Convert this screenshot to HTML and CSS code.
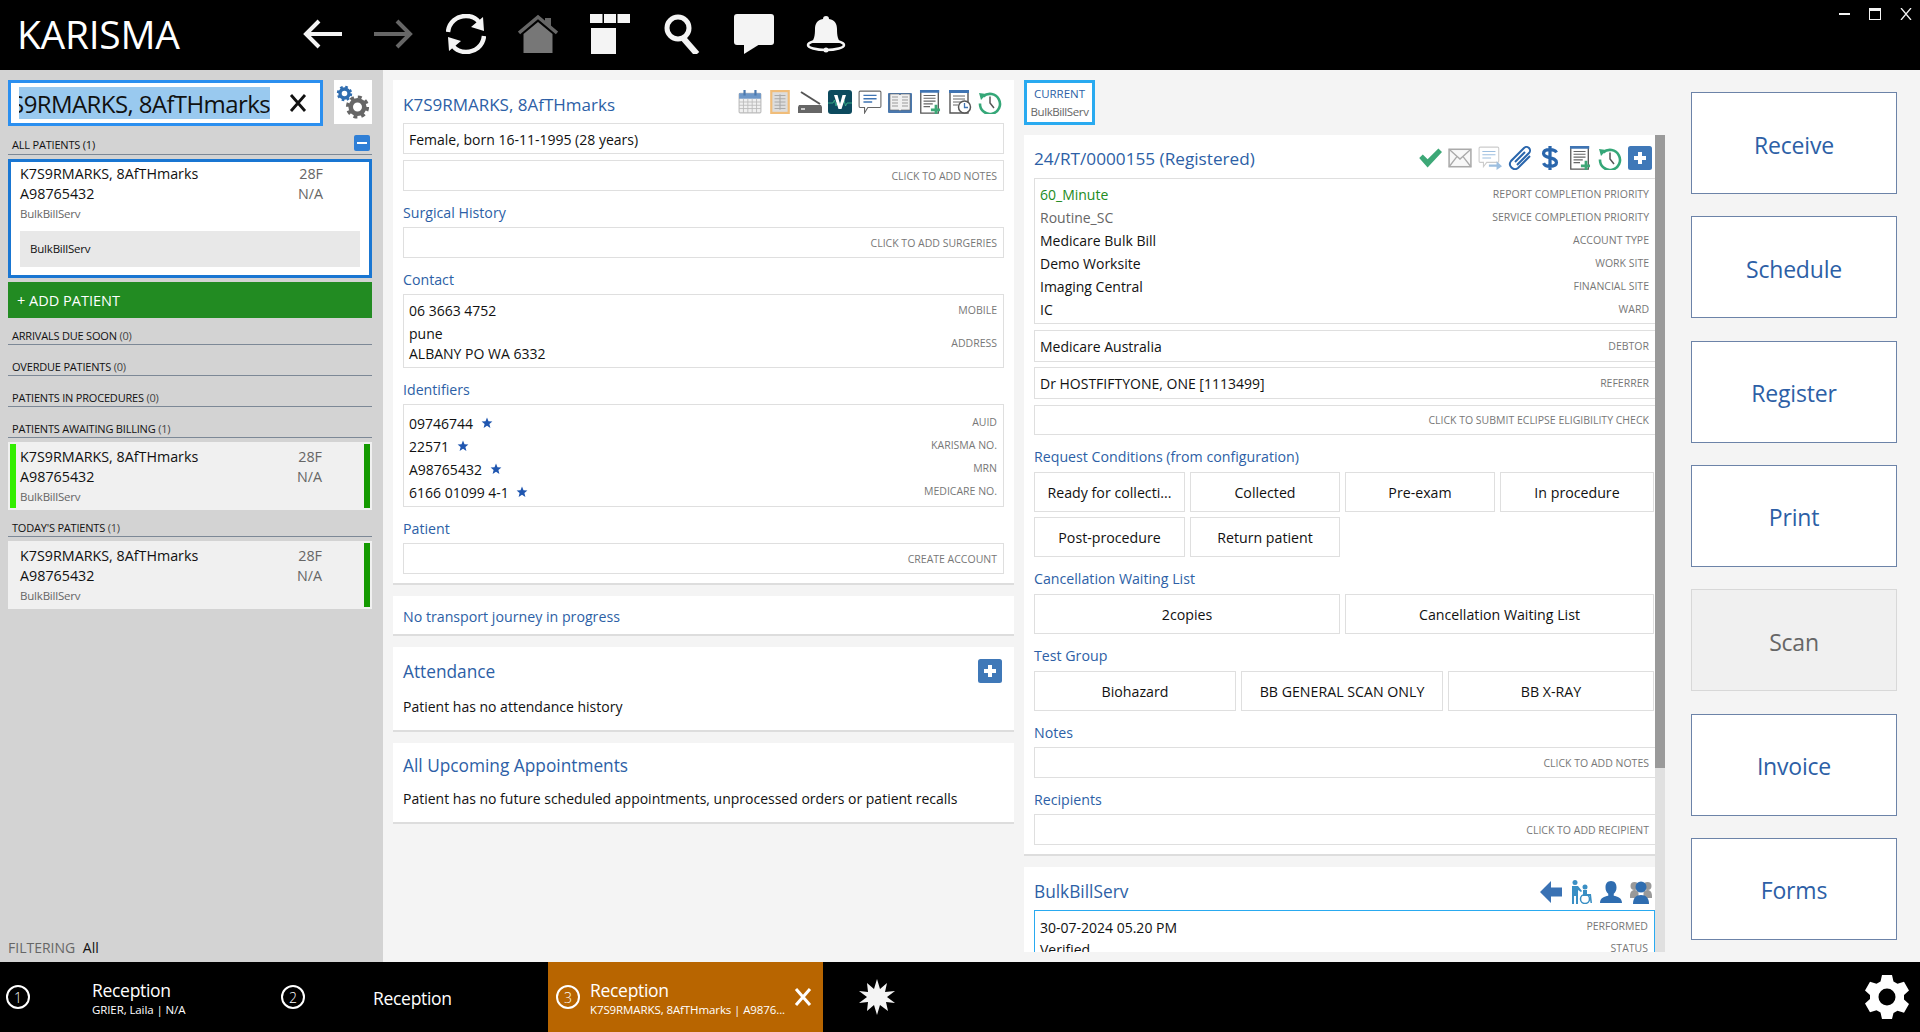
FILE: index.html
```html
<!DOCTYPE html>
<html lang="en">
<head>
  <meta charset="UTF-8">
  <meta name="viewport" content="width=device-width, initial-scale=1.0">
  <title>Karisma - Reception</title>
  <link rel="stylesheet" href="styles.css">
</head>
<body>
  <!-- shared icons -->
  <svg class="icon-defs" xmlns="http://www.w3.org/2000/svg">
    <symbol id="i-docplus" viewBox="0 0 22 26">
      <path d="M1 1h19v24H1z" fill="#fff" stroke="#555" stroke-width="1.4"/>
      <path d="M0 0h21v3H0z" fill="#3f74b3"/>
      <path d="M4 6h13M4 9h13M4 12h13M4 15h10M4 18h7" stroke="#666" stroke-width="1.2"/>
      <path d="M12 20h4v-4h3v4h3v3h-3v3h-3v-3h-4z" fill="#3da877"/>
    </symbol>
    <symbol id="i-history" viewBox="0 0 24 24">
      <path d="M5.2 6.6A10 10 0 1 1 2 13.5" fill="none" stroke="#35a778" stroke-width="2.6"/>
      <path d="M1 3l7.5 1L3 10z" fill="#35a778"/>
      <path d="M12 6.5v6.5l4 5" fill="none" stroke="#555" stroke-width="1.5"/>
    </symbol>
    <symbol id="i-plus" viewBox="0 0 24 24">
      <rect width="24" height="24" rx="2.5" fill="#3f78b8"/>
      <path d="M10 6h4v4h4v4h-4v4h-4v-4H6v-4h4z" fill="#fff"/>
    </symbol>
    <symbol id="i-star" viewBox="0 0 12 12">
      <path d="M6 .5l1.5 3.7 3.9.3-3 2.5 1 3.9L6 8.8l-3.4 2.1 1-3.9-3-2.5 3.9-.3z" fill="#1f56b0"/>
    </symbol>
  </svg>

  <header class="topbar">
    <div class="logo">KARISMA</div>
    <nav class="topnav">
      <svg viewBox="0 0 40 40"><path d="M40 20H5M17 7 4 20l13 13" fill="none" stroke="#f4f4f4" stroke-width="4"/></svg>
      <svg viewBox="0 0 40 40"><path d="M0 20h35M23 7l13 13-13 13" fill="none" stroke="#666" stroke-width="4"/></svg>
      <svg viewBox="0 0 40 40">
        <path d="M2 18C3 8 11 2 20 2c5 0 10 2 13 6" fill="none" stroke="#f4f4f4" stroke-width="4.5"/>
        <path d="M38 22c-1 10-9 16-18 16-5 0-10-2-13-6" fill="none" stroke="#f4f4f4" stroke-width="4.5"/>
        <path d="M37 3l1 14-13-4zM3 37 2 23l13 4z" fill="#f4f4f4"/>
      </svg>
      <svg viewBox="0 0 40 40">
        <path d="M27 4h6v9l-6-5z" fill="#666"/>
        <path d="M1 19 20 3l19 16" fill="none" stroke="#666" stroke-width="3.500"/>
        <path d="M5.500 20 20 8l14.500 12v19h-29z" fill="#777"/>
      </svg>
      <svg viewBox="0 0 40 40">
        <path d="M0 0h12.500v9H0zM14 0h12v9H14zM27.500 0H40v9H27.500zM1 14h25v26H1z" fill="#f4f4f4"/>
      </svg>
      <svg viewBox="0 0 40 40">
        <circle cx="16" cy="14" r="11" fill="none" stroke="#f4f4f4" stroke-width="5"/>
        <path d="M21 24l14 16" stroke="#f4f4f4" stroke-width="6"/>
      </svg>
      <svg viewBox="0 0 40 40">
        <rect width="40" height="31" rx="3" fill="#f4f4f4"/>
        <path d="M10 30v10l16-10z" fill="#f4f4f4"/>
      </svg>
      <svg viewBox="0 0 40 40">
        <path d="M20 2c2 0 3 1 3 3 6 1 8 5 8 10 0 7 1 11 4 14H5c3-3 4-7 4-14 0-5 2-9 8-10 0-2 1-3 3-3z" fill="#f4f4f4"/>
        <ellipse cx="20" cy="31" rx="18" ry="5" fill="none" stroke="#f4f4f4" stroke-width="2.500"/>
        <circle cx="20" cy="36" r="2.500" fill="#f4f4f4"/>
      </svg>
    </nav>
    <div class="window-btns">
      <span class="win-min"></span>
      <span class="win-max"></span>
      <svg viewBox="0 0 12 12" width="12" height="12"><path d="M1 0l10 12M11 0 1 12" stroke="#f4f4f4" stroke-width="1.300"/></svg>
    </div>
  </header>

  <main class="main">
    <aside class="left-panel">
      <div class="search-row">
        <div class="search-box">
          <div class="search-text"><span>K7S9RMARKS, 8AfTHmarks</span></div>
          <svg class="search-clear" viewBox="0 0 18 18"><path d="M2 1l14 16M16 1 2 17" stroke="#111" stroke-width="2.800"/></svg>
        </div>
        <div class="search-cog">
          <svg viewBox="0 0 38 44" width="38" height="44" fill="none">
            <circle cx="10.500" cy="13.500" r="6.500" stroke="#2f6db0" stroke-width="2.400" stroke-dasharray="2.550 2.550"/>
            <circle cx="10.500" cy="13.500" r="4.500" stroke="#2f6db0" stroke-width="3.400"/>
            <circle cx="23.500" cy="27" r="10" stroke="#666" stroke-width="3.200" stroke-dasharray="3.930 3.930"/>
            <circle cx="23.500" cy="27" r="6.800" stroke="#666" stroke-width="4.600"/>
          </svg>
        </div>
      </div>

      <div class="sec-head sec-head-first">
        <span>ALL PATIENTS (1)</span>
        <span class="collapse-btn"></span>
      </div>
      <div class="patient-selected">
        <div class="patient-row"><span>K7S9RMARKS, 8AfTHmarks</span><span class="muted">28F</span></div>
        <div class="patient-row"><span>A98765432</span><span class="muted">N/A</span></div>
        <div class="patient-serv">BulkBillServ</div>
        <div class="serv-chip">BulkBillServ</div>
      </div>
      <div class="add-patient">+ ADD PATIENT</div>

      <div class="sec-head"><span>ARRIVALS DUE SOON <i>(0)</i></span></div>
      <div class="sec-head"><span>OVERDUE PATIENTS <i>(0)</i></span></div>
      <div class="sec-head"><span>PATIENTS IN PROCEDURES <i>(0)</i></span></div>
      <div class="sec-head"><span>PATIENTS AWAITING BILLING <i>(1)</i></span></div>
      <div class="patient-card has-flag">
        <div class="patient-row"><span>K7S9RMARKS, 8AfTHmarks</span><span class="muted">28F</span></div>
        <div class="patient-row"><span>A98765432</span><span class="muted">N/A</span></div>
        <div class="patient-serv">BulkBillServ</div>
      </div>
      <div class="sec-head sec-head-today"><span>TODAY'S PATIENTS <i>(1)</i></span></div>
      <div class="patient-card">
        <div class="patient-row"><span>K7S9RMARKS, 8AfTHmarks</span><span class="muted">28F</span></div>
        <div class="patient-row"><span>A98765432</span><span class="muted">N/A</span></div>
        <div class="patient-serv">BulkBillServ</div>
      </div>

      <div class="filtering"><span>FILTERING</span> All</div>
    </aside>

    <section class="mid-col">
      <div class="card card-patient">
        <div class="card-head">
          <span class="title-sm">K7S9RMARKS, 8AfTHmarks</span>
          <div class="icon-row icon-row-mid">
            <svg viewBox="0 0 22 22"><rect x="1" y="3" width="20" height="18" rx="1" fill="#f0f0f0" stroke="#bbb"/><path d="M1 3h20v5H1z" fill="#6d97c8"/><path d="M5 0h2v5H5zM15 0h2v5h-2z" fill="#4a78ae"/><path d="M1 11h20M1 14h20M1 17h20M5 8v13M9 8v13M13 8v13M17 8v13" stroke="#bbb" stroke-width=".8"/></svg>
            <svg viewBox="0 0 18 22"><rect x="1" y="1" width="16" height="20" fill="#ddd" stroke="#f0bd7a" stroke-width="2"/><path d="M4 5h10M4 8h10M4 11h10M4 14h10M4 17h10M9 4v14" stroke="#aaa"/></svg>
            <svg viewBox="0 0 24 22"><path d="M3 1 22 13" stroke="#555" stroke-width="2" fill="none"/><path d="M1 14h22l1 2v6H0v-6z" fill="#666"/><path d="M3 18h4" stroke="#eee" stroke-width="1.500"/></svg>
            <svg viewBox="0 0 24 24"><rect width="24" height="24" rx="3" fill="#0c4a5e"/><path d="M0 13h5l1.500-3 1.500 6 1-3h6l1-3 1.500 6 1.500-3h5" fill="none" stroke="#3fbf8f" stroke-width=".8"/><path d="M6 5h3.500l2.500 9 2.500-9H18l-4.500 14h-3z" fill="#fff"/></svg>
            <svg viewBox="0 0 22 22"><path d="M2 1h18a1 1 0 0 1 1 1v13a1 1 0 0 1-1 1H9l-3 5v-5H2a1 1 0 0 1-1-1V2a1 1 0 0 1 1-1z" fill="#fff" stroke="#666"/><path d="M5 5h12M5 8h12M5 11h8" stroke="#3f74b3" stroke-width="1.200"/></svg>
            <svg viewBox="0 0 24 22"><rect y="2" width="24" height="20" rx="1" fill="#4a78ae"/><path d="M2 3h9l1 1 1-1h9v16h-9l-1 1-1-1H2z" fill="#f0f0f0" stroke="#666" stroke-width=".6"/><path d="M4 6h6M4 9h6M4 12h6M4 15h6M14 6h6M14 9h6M14 12h6M14 15h6" stroke="#999"/></svg>
            <svg viewBox="0 0 22 26"><use href="#i-docplus"/></svg>
            <svg viewBox="0 0 22 24"><path d="M1 1h18v22H1z" fill="#fff" stroke="#555" stroke-width="1.400"/><path d="M0 0h20v3H0z" fill="#3f74b3"/><path d="M4 6h12M4 9h12M4 12h8M4 15h5" stroke="#666"/><circle cx="15.500" cy="17" r="6" fill="#fff" stroke="#555" stroke-width="1.500"/><path d="M15.500 13v4.500h3.500" fill="none" stroke="#3f74b3" stroke-width="1.300"/></svg>
            <svg viewBox="0 0 24 24"><use href="#i-history"/></svg>
          </div>
        </div>
        <div class="field field-one"><span class="val">Female, born 16-11-1995 (28 years)</span></div>
        <div class="field field-click"><span class="lbl">CLICK TO ADD NOTES</span></div>
        <div class="sub-label">Surgical History</div>
        <div class="field field-click"><span class="lbl">CLICK TO ADD SURGERIES</span></div>
        <div class="sub-label">Contact</div>
        <div class="field field-contact">
          <div class="kv kv-mobile"><span class="val">06 3663 4752</span><span class="lbl">MOBILE</span></div>
          <div class="kv kv-address"><span class="val">pune<br>ALBANY PO WA 6332</span><span class="lbl">ADDRESS</span></div>
        </div>
        <div class="sub-label">Identifiers</div>
        <div class="field field-ids">
          <div class="kv"><span class="val">09746744 <svg class="star"><use href="#i-star"/></svg></span><span class="lbl">AUID</span></div>
          <div class="kv"><span class="val">22571 <svg class="star"><use href="#i-star"/></svg></span><span class="lbl">KARISMA NO.</span></div>
          <div class="kv"><span class="val">A98765432 <svg class="star"><use href="#i-star"/></svg></span><span class="lbl">MRN</span></div>
          <div class="kv"><span class="val">6166 01099 4-1 <svg class="star"><use href="#i-star"/></svg></span><span class="lbl">MEDICARE NO.</span></div>
        </div>
        <div class="sub-label">Patient</div>
        <div class="field field-click"><span class="lbl">CREATE ACCOUNT</span></div>
      </div>

      <div class="card card-transport"><span class="sub-text">No transport journey in progress</span></div>

      <div class="card card-attendance">
        <div class="attendance-head">
          <span class="title-lg">Attendance</span>
          <svg class="add-btn"><use href="#i-plus"/></svg>
        </div>
        <div class="plain">Patient has no attendance history</div>
      </div>

      <div class="card card-appts">
        <div class="title-lg">All Upcoming Appointments</div>
        <div class="plain plain-appts">Patient has no future scheduled appointments, unprocessed orders or patient recalls</div>
      </div>
    </section>

    <section class="right-col">
      <div class="tab-current">
        <span class="tab-top">CURRENT</span>
        <span class="tab-sub">BulkBillServ</span>
      </div>

      <div class="right-scroll">
        <div class="card card-request">
          <div class="request-head">
            <span class="title-req">24/RT/0000155 (Registered)</span>
            <div class="icon-row icon-row-req">
              <svg viewBox="0 0 20 16"><path d="M1 8l3-3 4 4 9-9 3 3L8 16z" fill="#3da877"/></svg>
              <svg viewBox="0 0 22 18"><rect x="1" y="1" width="20" height="16" fill="#f8f8f8" stroke="#aaa" stroke-width="1.400"/><path d="M1 1l10 9 10-9M1 17l7-9M21 17l-7-9" fill="none" stroke="#aaa" stroke-width="1.200"/></svg>
              <svg viewBox="0 0 22 22"><path d="M2 1h16a1 1 0 0 1 1 1v12a1 1 0 0 1-1 1H8l-3 4v-4H2a1 1 0 0 1-1-1V2a1 1 0 0 1 1-1z" fill="#fff" stroke="#ccc"/><path d="M4 5h12M4 8h12M4 11h8" stroke="#9dbfe0"/><path d="M10 17h7v-3l5 4.500-5 3.500v-3h-7z" fill="#9dbfe0"/></svg>
              <svg viewBox="0 0 24 24"><path d="M9 20 21 8a3.500 3.500 0 0 0-5-5L3 16a5 5 0 0 0 7 7L22 11M7 17 17 7" transform="translate(0 -1)" fill="none" stroke="#2a66ac" stroke-width="2"/></svg>
              <svg viewBox="0 0 18 26"><path d="M16 7c-1-2-3-3-7-3S2 5.500 2 8c0 6 14 3 14 10 0 3-3 4-7 4s-6-1-7-3.500M9 0v26" fill="none" stroke="#2a66ac" stroke-width="3.500"/></svg>
              <svg viewBox="0 0 22 26"><use href="#i-docplus"/></svg>
              <svg viewBox="0 0 24 24"><use href="#i-history"/></svg>
              <svg viewBox="0 0 24 24"><use href="#i-plus"/></svg>
            </div>
          </div>
          <div class="field-flush field-details">
            <div class="kv"><span class="val val-green">60_Minute</span><span class="lbl">REPORT COMPLETION PRIORITY</span></div>
            <div class="kv"><span class="val val-gray">Routine_SC</span><span class="lbl">SERVICE COMPLETION PRIORITY</span></div>
            <div class="kv"><span class="val">Medicare Bulk Bill</span><span class="lbl">ACCOUNT TYPE</span></div>
            <div class="kv"><span class="val">Demo Worksite</span><span class="lbl">WORK SITE</span></div>
            <div class="kv"><span class="val">Imaging Central</span><span class="lbl">FINANCIAL SITE</span></div>
            <div class="kv"><span class="val">IC</span><span class="lbl">WARD</span></div>
          </div>
          <div class="field-flush field-debtor"><span class="val">Medicare Australia</span><span class="lbl">DEBTOR</span></div>
          <div class="field-flush field-debtor"><span class="val">Dr HOSTFIFTYONE, ONE [1113499]</span><span class="lbl">REFERRER</span></div>
          <div class="field-flush field-eclipse"><span class="lbl">CLICK TO SUBMIT ECLIPSE ELIGIBILITY CHECK</span></div>

          <div class="sub-label">Request Conditions (from configuration)</div>
          <div class="btn-grid btn-grid-4">
            <div class="opt">Ready for collecti...</div>
            <div class="opt">Collected</div>
            <div class="opt">Pre-exam</div>
            <div class="opt">In procedure</div>
            <div class="opt">Post-procedure</div>
            <div class="opt">Return patient</div>
          </div>
          <div class="sub-label">Cancellation Waiting List</div>
          <div class="btn-grid btn-grid-2">
            <div class="opt">2copies</div>
            <div class="opt">Cancellation Waiting List</div>
          </div>
          <div class="sub-label">Test Group</div>
          <div class="btn-grid btn-grid-3">
            <div class="opt">Biohazard</div>
            <div class="opt">BB GENERAL SCAN ONLY</div>
            <div class="opt">BB X-RAY</div>
          </div>
          <div class="sub-label">Notes</div>
          <div class="field-flush field-click-r"><span class="lbl">CLICK TO ADD NOTES</span></div>
          <div class="sub-label">Recipients</div>
          <div class="field-flush field-click-r"><span class="lbl">CLICK TO ADD RECIPIENT</span></div>
        </div>

        <div class="card card-service">
          <div class="service-head">
            <span class="title-lg">BulkBillServ</span>
            <div class="icon-row icon-row-serv">
              <svg viewBox="0 0 24 24"><path d="M0 12 12 0v7h12v10H12v7z" fill="#3a72b4"/></svg>
              <svg viewBox="0 0 22 24"><circle cx="5" cy="2.500" r="2.500" fill="#3a8fc4"/><path d="M2 6h6l4 5-1 1-3-2v14H6v-8H4v8H2z" fill="#3a8fc4"/><circle cx="15" cy="7" r="2.500" fill="#3a8fc4"/><path d="M13 10h4v4h4l1 9h-1.500l-1-7H13z" fill="#3a8fc4"/><circle cx="15" cy="19" r="4.500" fill="none" stroke="#3a8fc4" stroke-width="1.500"/></svg>
              <svg viewBox="0 0 24 24"><path d="M12 0c4 0 6 3 6 7 0 3-1 5-3 7v2c4 1 9 2 9 8H0c0-6 5-7 9-8v-2C7 12 6 10 6 7c0-4 2-7 6-7z" fill="#2f6db0"/></svg>
              <svg viewBox="0 0 22 24"><circle cx="4.500" cy="6" r="4" fill="#999"/><circle cx="17.500" cy="6" r="4" fill="#999"/><path d="M0 16c0-4 2-6 4.500-6s4 1 4 3v5H0zM22 16c0-4-2-6-4.500-6s-4 1-4 3v5H22z" fill="#999"/><circle cx="11" cy="7" r="5.500" fill="#2f6db0"/><path d="M3 24c0-6 3-9 8-9s8 3 8 9z" fill="#2f6db0"/></svg>
            </div>
          </div>
          <div class="service-box">
            <div class="kv"><span class="val">30-07-2024 05.20 PM</span><span class="lbl">PERFORMED</span></div>
            <div class="kv"><span class="val">Verified</span><span class="lbl">STATUS</span></div>
          </div>
        </div>
      </div>
      <div class="scrollbar"><div class="scroll-thumb"></div></div>
    </section>

    <section class="action-col">
      <div class="action">Receive</div>
      <div class="action">Schedule</div>
      <div class="action">Register</div>
      <div class="action">Print</div>
      <div class="action action-off">Scan</div>
      <div class="action">Invoice</div>
      <div class="action">Forms</div>
    </section>
  </main>

  <footer class="footer">
    <div class="ftab ftab-one">
      <span class="num">1</span>
      <div class="ftab-text"><span class="ftab-name">Reception</span><span class="ftab-sub">GRIER, Laila | N/A</span></div>
    </div>
    <div class="ftab ftab-two">
      <span class="num">2</span>
      <div class="ftab-text"><span class="ftab-name">Reception</span></div>
    </div>
    <div class="ftab ftab-three">
      <span class="num">3</span>
      <div class="ftab-text"><span class="ftab-name">Reception</span><span class="ftab-sub">K7S9RMARKS, 8AfTHmarks | A9876...</span></div>
      <svg class="ftab-close" viewBox="0 0 18 18"><path d="M2 1l14 16M16 1 2 17" stroke="#fff" stroke-width="3"/></svg>
    </div>
    <svg class="burst" viewBox="0 0 36 36">
      <path d="M18 0l3 10 7-6-2 9 10-1-8 6 8 6-9-1 2 9-8-6-3 10-3-10-7 6 1-9-9 1 8-6-8-6 9 1-1-9 7 6z" fill="#f4f4f4"/>
    </svg>
    <svg class="gear" viewBox="0 0 44 44">
      <path fill="#fff" fill-rule="evenodd" d="M17 0h10l1.500 6.500 4 2.300L39 6.800l5 8.700-5 4.500v4.600l5 4.500-5 8.700-6.500-2-4 2.300L27 44H17l-1.500-6.500-4-2.300L5 37.200l-5-8.700 5-4.500V20L0 15.500l5-8.700 6.500 2 4-2.300zM22 13.500a8.500 8.500 0 1 0 0 17 8.500 8.500 0 0 0 0-17z"/>
    </svg>
  </footer>
</body>
</html>
```

FILE: styles.css
```css
* {
  box-sizing: border-box;
}
body {
  margin: 0;
  height: 1032px;
  overflow: hidden;
  font-family: "Open Sans", sans-serif;
  font-size: 14px;
  color: #111;
  background: #f4f4f4;
}
.icon-defs {
  display: none;
}

/* top bar */
.topbar {
  display: flex;
  height: 70px;
  background: #000;
}
.logo {
  width: 302px;
  padding-left: 17px;
  font-size: 39px;
  line-height: 68px;
  letter-spacing: -0.3px;
  color: #fff;
}
.topnav {
  display: flex;
  gap: 32px;
  padding-top: 14px;
}
.topnav svg {
  width: 40px;
  height: 40px;
}
.window-btns {
  display: flex;
  align-items: center;
  gap: 19px;
  height: 28px;
  margin-left: auto;
  padding-right: 8px;
}
.win-min {
  width: 11px;
  height: 2px;
  background: #f4f4f4;
}
.win-max {
  width: 12px;
  height: 12px;
  border: 1px solid #f4f4f4;
  border-top-width: 3px;
}

.main {
  display: flex;
  height: 892px;
}

/* left panel */
.left-panel {
  position: relative;
  width: 383px;
  padding: 10px 11px 0 8px;
  background: #d3d3d3;
}
.search-row {
  display: flex;
  gap: 11px;
}
.search-box {
  display: flex;
  align-items: center;
  width: 315px;
  height: 46px;
  padding-left: 8px;
  border: 3px solid #2b8fef;
  background: #fff;
}
.search-text {
  display: flex;
  justify-content: flex-end;
  width: 251px;
  height: 32px;
  overflow: hidden;
  background: #99c9ef;
  font-size: 24px;
  line-height: 34px;
  white-space: nowrap;
  letter-spacing: -0.6px;
}
.search-text span {
  flex: none;
}
.search-clear {
  width: 18px;
  height: 18px;
  margin-left: 19px;
}
.search-cog {
  width: 38px;
  height: 44px;
  background: #fff;
}
.sec-head {
  display: flex;
  justify-content: space-between;
  align-items: center;
  height: 27px;
  margin-top: 4px;
  padding: 8px 2px 0 4px;
  border-bottom: 1px solid #7c8896;
  font-size: 11px;
  letter-spacing: -0.2px;
}
.sec-head i {
  font-style: normal;
  color: #444;
}
.sec-head-first {
  margin-top: 2px;
  padding-top: 6px;
}
.collapse-btn {
  position: relative;
  width: 16px;
  height: 16px;
  margin-top: -3px;
  border-radius: 2px;
  background: #2f7fd6;
}
.collapse-btn::after {
  content: "";
  position: absolute;
  left: 3px;
  top: 7px;
  width: 10px;
  height: 2px;
  background: #fff;
}
.patient-row {
  display: flex;
  justify-content: space-between;
  height: 20px;
  font-size: 14.3px;
  line-height: 20px;
  padding-right: 37px;
}
.muted {
  color: #666;
}
.patient-serv {
  height: 20px;
  font-size: 11.5px;
  line-height: 20px;
  letter-spacing: -0.2px;
  color: #666;
}
.patient-selected {
  height: 119px;
  margin-top: 4px;
  padding: 2px 9px 0;
  border: 3px solid #1976d2;
  background: #fff;
}
.serv-chip {
  width: 340px;
  height: 36px;
  margin-top: 7px;
  padding-left: 10px;
  background: #e8e8e8;
  font-size: 11.5px;
  line-height: 36px;
  letter-spacing: -0.2px;
}
.add-patient {
  height: 36px;
  margin-top: 4px;
  padding-left: 9px;
  background: #228b22;
  color: #fff;
  font-size: 14.5px;
  line-height: 37px;
}
.add-patient + .sec-head {
  margin-top: 0;
}
.patient-card {
  position: relative;
  height: 68px;
  margin-top: 4px;
  padding: 5px 12px 0;
  background: #f0f0f0;
}
.patient-card::after {
  content: "";
  position: absolute;
  right: 2px;
  top: 2px;
  bottom: 2px;
  width: 6px;
  background: #149a00;
}
.has-flag::before {
  content: "";
  position: absolute;
  left: 2px;
  top: 2px;
  bottom: 2px;
  width: 6px;
  background: #33ee00;
}
.patient-card .patient-row {
  padding-right: 38px;
}
.sec-head-today {
  margin-top: 0;
}
.filtering {
  position: absolute;
  left: 8px;
  bottom: 5px;
  font-size: 14px;
}
.filtering span {
  margin-right: 4px;
  color: #666;
}

/* shared card bits */
.card {
  background: #fff;
  border-bottom: 2px solid #ddd;
}
.icon-row {
  display: flex;
  align-items: center;
}
.sub-label {
  height: 20px;
  margin: 12px 0 4px;
  color: #2d5fa6;
  font-size: 14.2px;
  line-height: 20px;
}
.title-sm {
  color: #2d5fa6;
  font-size: 17px;
}
.title-lg {
  color: #2d5fa6;
  font-size: 17.3px;
}
.lbl {
  margin-bottom: 2px;
  color: #777;
  font-size: 10.5px;
}
.field-click .lbl,
.field-click-r .lbl,
.field-debtor .lbl,
.field-eclipse .lbl {
  margin-bottom: 0;
}
.field-ids .lbl {
  margin-bottom: 4px;
}
.kv {
  display: flex;
  justify-content: space-between;
  align-items: center;
}
.val-green {
  color: #228b22;
}
.val-gray {
  color: #666;
}

/* middle column */
.mid-col {
  width: 621px;
  margin-left: 10px;
  padding-top: 10px;
}
.card-patient {
  height: 505px;
  padding: 0 10px;
}
.card-head {
  display: flex;
  justify-content: space-between;
  align-items: center;
  height: 43px;
  padding-top: 6px;
}
.icon-row-mid {
  gap: 6px;
  margin-top: -5px;
  padding-right: 2px;
}
.icon-row-mid svg {
  width: 24px;
  height: 24px;
}
.field {
  border: 1px solid #dfdfdf;
  padding: 0 6px 0 5px;
}
.field-one {
  height: 31px;
  line-height: 31px;
}
.field-click {
  display: flex;
  justify-content: flex-end;
  align-items: center;
  height: 31px;
  margin-top: 6px;
}
.sub-label + .field-click {
  margin-top: 0;
}
.field-contact {
  height: 74px;
  padding-top: 4px;
}
.kv-mobile {
  height: 23px;
}
.kv-address {
  line-height: 20px;
  margin-top: 2px;
}
.field-ids {
  height: 103px;
  padding-top: 7px;
}
.field-ids .kv {
  height: 23px;
}
.star {
  width: 12px;
  height: 12px;
  margin-left: 4px;
}
.card-transport {
  height: 40px;
  margin-top: 11px;
  padding-left: 10px;
  line-height: 41px;
}
.sub-text {
  color: #2d5fa6;
  font-size: 14.2px;
}
.card-attendance {
  height: 85px;
  margin-top: 11px;
  padding: 13px 10px 0;
}
.attendance-head {
  display: flex;
  justify-content: space-between;
  align-items: flex-start;
  padding-right: 2px;
  height: 27px;
}
.add-btn {
  width: 24px;
  height: 24px;
  margin-top: -1px;
}
.plain {
  margin-top: 10px;
  line-height: 20px;
}
.card-appts {
  height: 81px;
  margin-top: 11px;
  padding: 11px 10px 0;
}
.plain-appts {
  margin-top: 12px;
}

/* right column */
.right-col {
  position: relative;
  width: 641px;
  height: 882px;
  margin-left: 10px;
  padding-top: 10px;
}
.tab-current {
  display: flex;
  flex-direction: column;
  align-items: center;
  width: 71px;
  height: 45px;
  padding-top: 2px;
  border: 3px solid #29aaf0;
  background: #fff;
}
.tab-top {
  color: #2d5fa6;
  font-size: 11.5px;
  line-height: 18px;
}
.tab-sub {
  color: #666;
  font-size: 11.5px;
  line-height: 18px;
  letter-spacing: -0.4px;
}
.right-scroll {
  height: 817px;
  margin-top: 10px;
  overflow: hidden;
}
.card-request {
  width: 631px;
  height: 721px;
  padding-left: 10px;
}
.request-head {
  display: flex;
  justify-content: space-between;
  align-items: center;
  height: 43px;
  padding-top: 3px;
}
.title-req {
  color: #2d5fa6;
  font-size: 17.2px;
}
.icon-row-req {
  gap: 6px;
  padding-right: 3px;
}
.icon-row-req svg {
  width: 24px;
  height: 24px;
}
.field-flush {
  display: flex;
  align-items: center;
  justify-content: space-between;
  border: 1px solid #dfdfdf;
  border-right: 0;
  padding: 0 6px 0 5px;
}
.field-details {
  display: block;
  height: 146px;
  padding-top: 4px;
}
.field-details .kv {
  height: 23px;
}
.field-debtor {
  height: 32px;
  margin-top: 6px;
}
.field-debtor + .field-debtor {
  margin-top: 5px;
}
.field-eclipse {
  justify-content: flex-end;
  height: 30px;
  margin-top: 6px;
}
.card-request .sub-label {
  margin-bottom: 5px;
}
.field-click-r {
  justify-content: flex-end;
  height: 31px;
  margin-top: -1px;
}
.btn-grid {
  display: grid;
  gap: 5px;
  width: 621px;
  padding-right: 1px;
}
.btn-grid-4 {
  grid-template-columns: 151px 150px 150px 1fr;
}
.btn-grid-3 {
  grid-template-columns: 202px 202px 1fr;
}
.btn-grid-2 {
  grid-template-columns: 306px 1fr;
}
.opt {
  display: flex;
  align-items: center;
  justify-content: center;
  height: 40px;
  border: 1px solid #dfdfdf;
  font-size: 14.2px;
}
.card-service {
  width: 631px;
  height: 120px;
  margin-top: 11px;
  padding-left: 10px;
  border-bottom: 0;
}
.service-head {
  display: flex;
  justify-content: space-between;
  align-items: center;
  height: 43px;
  padding-top: 6px;
}
.icon-row-serv {
  gap: 8px;
  padding-right: 3px;
}
.icon-row-serv svg {
  width: 22px;
  height: 24px;
}
.service-box {
  height: 60px;
  padding: 5px 6px 0 5px;
  border: 1px solid #29aaf0;
}
.service-box .kv {
  height: 22px;
}
.scrollbar {
  position: absolute;
  right: 0;
  top: 65px;
  width: 10px;
  height: 817px;
  background: #e0e0e0;
}
.scroll-thumb {
  height: 633px;
  background: #9a9a9a;
}

/* action buttons */
.action-col {
  display: flex;
  flex-direction: column;
  justify-content: space-between;
  width: 206px;
  height: 848px;
  margin: 22px 0 0 26px;
}
.action {
  display: flex;
  align-items: center;
  justify-content: center;
  height: 102px;
  padding-top: 3px;
  border: 1px solid #6c83a8;
  background: #fff;
  color: #2d5fa6;
  font-size: 23px;
  letter-spacing: -0.2px;
}
.action-off {
  border-color: #d8d8d8;
  background: #f0f0f0;
  color: #666;
}

/* footer */
.footer {
  position: relative;
  display: flex;
  align-items: center;
  height: 70px;
  background: #000;
  color: #fff;
}
.ftab {
  display: flex;
  align-items: center;
  height: 70px;
}
.num {
  display: flex;
  align-items: center;
  justify-content: center;
  flex: none;
  width: 24px;
  height: 24px;
  border: 2px solid #fff;
  border-radius: 50%;
  font-size: 14px;
  font-weight: 300;
}
.ftab-text {
  display: flex;
  flex-direction: column;
  padding-top: 2px;
}
.ftab-name {
  font-size: 17.5px;
  line-height: 24px;
  letter-spacing: -0.3px;
}
.ftab-sub {
  font-size: 11.5px;
  line-height: 16px;
  letter-spacing: -0.1px;
}
.ftab-one {
  width: 281px;
  padding-left: 6px;
}
.ftab-one .ftab-text {
  margin-left: 62px;
}
.ftab-two {
  width: 267px;
}
.ftab-two .ftab-text {
  margin-left: 68px;
}
.ftab-three {
  position: relative;
  width: 275px;
  padding-left: 8px;
  background: #b86500;
}
.ftab-three .ftab-text {
  margin-left: 10px;
}
.ftab-close {
  position: absolute;
  right: 11px;
  top: 26px;
  width: 18px;
  height: 18px;
}
.burst {
  width: 36px;
  height: 36px;
  margin-left: 36px;
}
.gear {
  position: absolute;
  right: 11px;
  top: 13px;
  width: 44px;
  height: 44px;
}
```
